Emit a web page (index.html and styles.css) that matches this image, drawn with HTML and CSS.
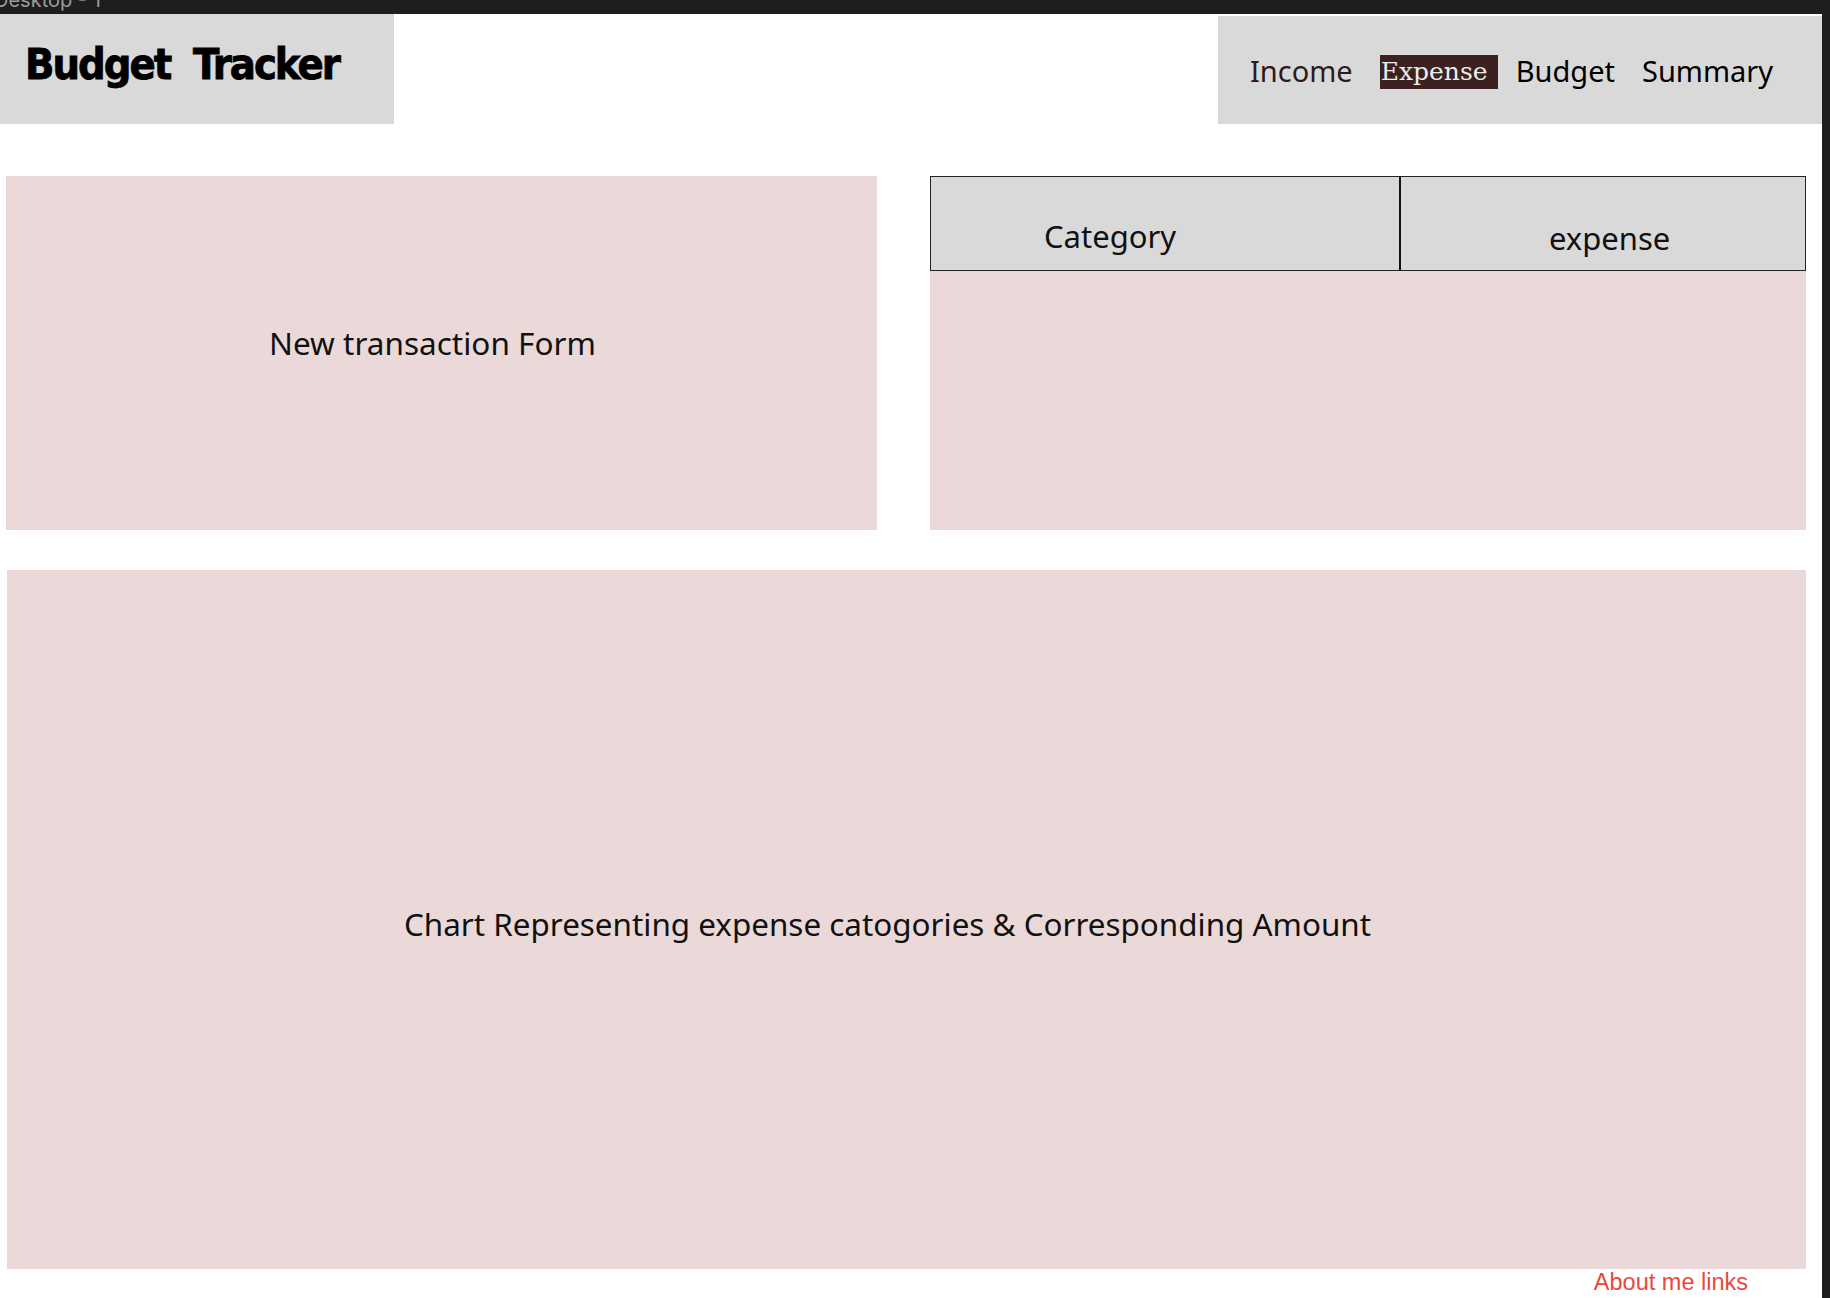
FILE: index.html
```html
<!DOCTYPE html>
<html lang="en">
<head>
<meta charset="utf-8">
<title>Budget Tracker</title>
<link rel="stylesheet" href="styles.css">
</head>
<body>
<div class="desk">
  <div class="frame-label"><span>Desktop - 1</span></div>
  <div class="frame">
    <header class="top">
      <div class="logo"><h1>Budget&nbsp; Tracker</h1></div>
      <nav class="nav">
        <a class="nav-item income">Income</a>
        <a class="nav-item active">Expense</a>
        <a class="nav-item budget">Budget</a>
        <a class="nav-item">Summary</a>
      </nav>
    </header>
    <main>
      <section class="row">
        <div class="panel form-panel"><span>New transaction Form</span></div>
        <div class="panel table-panel">
          <div class="thead">
            <div class="th th-cat">Category</div>
            <div class="th th-exp">expense</div>
          </div>
          <div class="tbody"></div>
        </div>
      </section>
      <section class="panel chart-panel"><span>Chart Representing expense catogories &amp; Corresponding Amount</span></section>
    </main>
    <footer class="foot"><a class="about">About me links</a></footer>
  </div>
</div>
</body>
</html>
```
FILE: styles.css
```css
* { box-sizing: border-box; }
html, body { margin: 0; padding: 0; }
body {
  background: #1e1e1e;
  width: 1830px;
  height: 1298px;
  overflow: hidden;
  font-family: "Noto Sans", "Open Sans", sans-serif;
  color: #111;
}
.desk { width: 1830px; height: 1298px; }
.frame-label {
  height: 14px;
  overflow: hidden;
  font-family: Inter, "Noto Sans", sans-serif;
  font-size: 20px;
  line-height: 20px;
  color: #9b9b9b;
}
.frame-label span { display: block; margin-top: -10px; margin-left: -6px; }
.frame {
  width: 1822px;
  height: 1284px;
  background: #ffffff;
}
.top {
  display: flex;
  justify-content: space-between;
  align-items: flex-end;
  height: 110px;
}
.logo {
  width: 394px;
  height: 110px;
  background: #d9d9d9;
  padding: 25px 0 0 25px;
}
.logo h1 {
  margin: 0;
  font-family: "DejaVu Sans Condensed", "DejaVu Sans", sans-serif;
  font-weight: 700;
  font-size: 43px;
  line-height: 50px;
  color: #000;
  letter-spacing: -2px;
  -webkit-text-stroke: 0.8px #000;
  white-space: nowrap;
}
.nav {
  width: 604px;
  height: 108px;
  background: #d9d9d9;
  display: flex;
  align-items: center;
  padding: 2px 0 0 32px;
}
.nav-item {
  font-size: 29px;
  line-height: 36px;
  color: #000;
  margin-right: 27px;
}
.nav-item.income { color: #2e1a1a; }
.nav-item.active {
  font-family: "DejaVu Serif", "Liberation Serif", serif;
  font-size: 25px;
  line-height: 33px;
  height: 34px;
  width: 118px;
  padding-left: 1px;
  background: #3c2121;
  color: #ececec;
  margin-right: 18px;
  margin-top: 2px;
}
.row {
  display: grid;
  grid-template-columns: 871px 876px;
  column-gap: 53px;
  margin: 52px 0 0 6px;
}
.panel { background: #ebd9d9; }
.form-panel {
  height: 354px;
  display: flex;
  align-items: center;
  justify-content: center;
  padding: 0 18px 22px 0;
  font-size: 31.5px;
}
.table-panel {
  height: 354px;
  display: flex;
  flex-direction: column;
}
.thead {
  display: grid;
  grid-template-columns: 470px 1fr;
  height: 95px;
  background: #d9d9d9;
  border: 1px solid #222;
}
.th {
  font-size: 31px;
  line-height: 40px;
}
.th-cat { padding: 39px 0 0 113px; border-right: 2px solid #111; }
.th-exp { padding: 41px 0 0 148px; }
.tbody { flex: 1; }
.chart-panel {
  width: 1799px;
  height: 699px;
  margin: 40px 0 0 7px;
  display: flex;
  align-items: center;
  justify-content: center;
  padding: 8px 38px 0 0;
  font-size: 31.4px;
}
.foot {
  display: flex;
  justify-content: flex-end;
  padding-right: 74px;
}
.about {
  font-family: "Liberation Sans", Arial, sans-serif;
  font-size: 23.5px;
  line-height: 26px;
  color: #e9483c;
}
```
